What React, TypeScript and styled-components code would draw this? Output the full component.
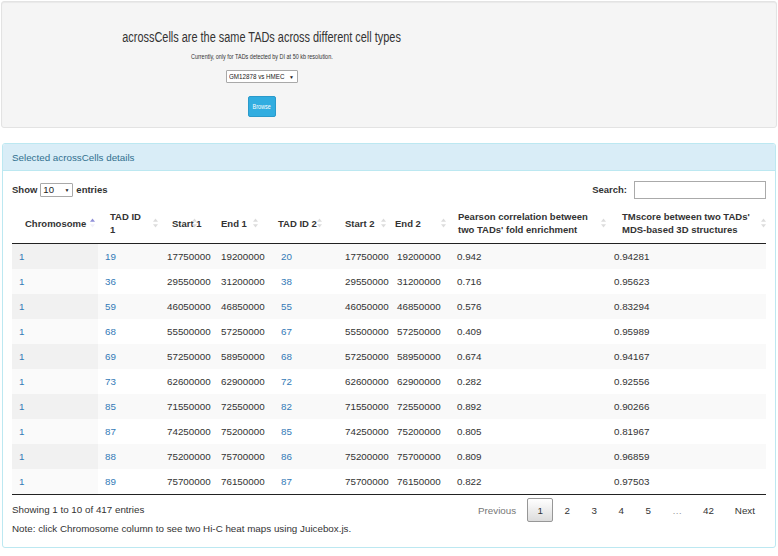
import React from 'react';
import styled, { createGlobalStyle, css } from 'styled-components';

const GlobalStyle = createGlobalStyle`
  html, body { margin: 0; padding: 0; background: #fff; }
  body {
    font-family: "Liberation Sans", Arial, Helvetica, sans-serif;
    font-size: 9.8px;
    color: #333;
  }
  * { box-sizing: border-box; }
`;

/* the top well uses a condensed face; emulate it by squeezing the glyphs */
const narrow = css`
  display: inline-block;
  white-space: nowrap;
  transform: scaleX(0.78);
  transform-origin: center;
`;

const Page = styled.div`
  width: 778px;
  padding: 1px 1px 8px 1px;
`;

const Well = styled.div`
  height: 127px;
  background: #f5f5f5;
  border: 1px solid #e3e3e3;
  border-radius: 3px;
  box-shadow: inset 0 1px 1px rgba(0, 0, 0, 0.05);
`;

const WellColumn = styled.div`
  width: 520px;
  padding-top: 27px;
  display: flex;
  flex-direction: column;
  align-items: center;
`;

const Title = styled.h3`
  ${narrow};
  margin: 0;
  font-size: 14px;
  line-height: 16px;
  font-weight: normal;
  color: #333;
`;

const Subtitle = styled.p`
  ${narrow};
  margin: 7px 0 0;
  font-size: 7px;
  line-height: 10px;
  color: #333;
`;

const FakeSelect = styled.div<{ $w: number; $h: number; $fs: number }>`
  width: ${(p) => p.$w}px;
  height: ${(p) => p.$h}px;
  display: flex;
  align-items: center;
  justify-content: space-between;
  padding: 0 3px 0 2px;
  background: #fff;
  border: 1px solid #a9a9a9;
  border-radius: 1px;
  font-size: ${(p) => p.$fs}px;
  font-weight: normal;
  color: #222;
  overflow: hidden;
`;

const NarrowText = styled.span`
  ${narrow};
  transform-origin: left center;
  margin-right: -16px;
`;

const Caret = styled.span`
  font-size: 5px;
  color: #222;
`;

const TopSelect = styled(FakeSelect)`
  margin-top: 8px;
`;

const BrowseButton = styled.button`
  margin-top: 13px;
  width: 28px;
  height: 21px;
  padding: 0;
  display: flex;
  align-items: center;
  justify-content: center;
  background: #31ade0;
  border: 1px solid #2a9acb;
  border-radius: 2px;
  color: #fff;
  font-family: inherit;
  font-size: 7px;
`;

const ButtonText = styled.span`
  ${narrow};
`;

const Panel = styled.div`
  margin: 15px 1px 0 1px;
  border: 1px solid #bce8f1;
  border-radius: 3px;
  overflow: hidden;
`;

const PanelHeading = styled.div`
  height: 27px;
  display: flex;
  align-items: center;
  padding: 0 9px;
  background: #d9edf7;
  border-bottom: 1px solid #bce8f1;
  color: #31708f;
  font-size: 9.8px;
`;

const PanelBody = styled.div`
  padding: 9px 9px 12px 9px;
`;

const Controls = styled.div`
  height: 19px;
  display: flex;
  align-items: center;
  justify-content: space-between;
`;

const Label = styled.label`
  display: flex;
  align-items: center;
  gap: 3px;
  font-weight: bold;
  font-size: 9.5px;
`;

const SearchInput = styled.div`
  width: 132px;
  height: 18px;
  margin-left: 4px;
  border: 1px solid #aaa;
  background: #fff;
`;

const Table = styled.table`
  width: 754px;
  margin-top: 4px;
  table-layout: fixed;
  border-collapse: collapse;
  border-bottom: 1px solid #222;
`;

const Col = styled.col<{ $w: number }>`
  width: ${(p) => p.$w}px;
`;

const Th = styled.th<{ $pl: number }>`
  position: relative;
  padding: 7px 9px 7px ${(p) => p.$pl}px;
  line-height: 13px;
  font-weight: bold;
  font-size: 9.5px;
  text-align: left;
  vertical-align: middle;
  border-bottom: 1px solid #222;
`;

const SortIcon = styled.svg<{ $r: number }>`
  position: absolute;
  right: ${(p) => p.$r}px;
  top: 50%;
  margin-top: -5px;
  width: 7px;
  height: 10px;
`;

const Tr = styled.tr<{ $odd: boolean }>`
  background: ${(p) => (p.$odd ? '#f9f9f9' : '#fff')};
  & + & td { border-top: 1px solid #ddd; }
`;

const Td = styled.td<{ $sorted?: boolean; $odd: boolean }>`
  padding: 7px 7px;
  line-height: 11px;
  text-align: left;
  white-space: nowrap;
  background: ${(p) => (p.$sorted ? (p.$odd ? '#f1f1f1' : '#fafafa') : 'transparent')};
`;

const Link = styled.a`
  color: #337ab7;
  text-decoration: none;
`;

const Footer = styled.div`
  display: flex;
  justify-content: space-between;
  align-items: center;
  margin-top: 3px;
`;

const Info = styled.div`
  line-height: 12px;
`;

const Pager = styled.div`
  display: flex;
  align-items: center;
  margin-right: 1px;
`;

const PageButton = styled.span<{ $current?: boolean; $tone?: string }>`
  display: flex;
  align-items: center;
  justify-content: center;
  height: 24px;
  min-width: 26px;
  padding: 0 9px;
  margin-left: 1px;
  border: 1px solid ${(p) => (p.$current ? '#979797' : 'transparent')};
  border-radius: 2px;
  background: ${(p) => (p.$current ? 'linear-gradient(to bottom, #fff 0%, #dcdcdc 100%)' : 'transparent')};
  color: ${(p) => p.$tone ?? '#333'};
`;

const Note = styled.p`
  margin: 1px 0 0;
  line-height: 12px;
`;

type Column = { label: React.ReactNode; w: number; pl: number; ir: number; asc?: boolean };

const columns: Column[] = [
  { label: 'Chromosome', w: 86, pl: 13, ir: 2.5, asc: true },
  { label: <>TAD ID<br />1</>, w: 62, pl: 12, ir: 1.5 },
  { label: 'Start 1', w: 54, pl: 12, ir: 16.5 },
  { label: 'End 1', w: 60, pl: 7, ir: 15.5 },
  { label: 'TAD ID 2', w: 64, pl: 4, ir: 15 },
  { label: 'Start 2', w: 52, pl: 7, ir: 3.5 },
  { label: 'End 2', w: 60, pl: 5, ir: 3.5 },
  { label: 'Pearson correlation between two TADs\' fold enrichment', w: 157, pl: 8, ir: 0.5 },
  { label: 'TMscore between two TADs\' MDS-based 3D structures', w: 159, pl: 15, ir: -0.5 },
];

const rows: string[][] = [
  ['1', '19', '17750000', '19200000', '20', '17750000', '19200000', '0.942', '0.94281'],
  ['1', '36', '29550000', '31200000', '38', '29550000', '31200000', '0.716', '0.95623'],
  ['1', '59', '46050000', '46850000', '55', '46050000', '46850000', '0.576', '0.83294'],
  ['1', '68', '55500000', '57250000', '67', '55500000', '57250000', '0.409', '0.95989'],
  ['1', '69', '57250000', '58950000', '68', '57250000', '58950000', '0.674', '0.94167'],
  ['1', '73', '62600000', '62900000', '72', '62600000', '62900000', '0.282', '0.92556'],
  ['1', '85', '71550000', '72550000', '82', '71550000', '72550000', '0.892', '0.90266'],
  ['1', '87', '74250000', '75200000', '85', '74250000', '75200000', '0.805', '0.81967'],
  ['1', '88', '75200000', '75700000', '86', '75200000', '75700000', '0.809', '0.96859'],
  ['1', '89', '75700000', '76150000', '87', '75700000', '76150000', '0.822', '0.97503'],
];

const linkCols = new Set([0, 1, 4]);

function Sort({ asc, right }: { asc?: boolean; right: number }) {
  return (
    <SortIcon $r={right} viewBox="0 0 7 10">
      <path d="M3.5 0.5 L6 3.8 L1 3.8 Z" fill={asc ? '#8f8fd8' : '#dcdcdc'} />
      <path d="M3.5 9.5 L6 6.2 L1 6.2 Z" fill={asc ? '#f0f0f8' : '#dcdcdc'} />
    </SortIcon>
  );
}

export default function App() {
  return (
    <Page>
      <GlobalStyle />
      <Well>
        <WellColumn>
          <Title>acrossCells are the same TADs across different cell types</Title>
          <Subtitle>Currently, only for TADs detected by DI at 50 kb resolution.</Subtitle>
          <TopSelect $w={72} $h={13} $fs={8}>
            <NarrowText>GM12878 vs HMEC</NarrowText>
            <Caret>▼</Caret>
          </TopSelect>
          <BrowseButton>
            <ButtonText>Browse</ButtonText>
          </BrowseButton>
        </WellColumn>
      </Well>
      <Panel>
        <PanelHeading>Selected acrossCells details</PanelHeading>
        <PanelBody>
          <Controls>
            <Label>
              Show
              <FakeSelect $w={33} $h={14} $fs={9.6}>
                <span>10</span>
                <Caret>▼</Caret>
              </FakeSelect>
              entries
            </Label>
            <Label>
              Search:
              <SearchInput />
            </Label>
          </Controls>
          <Table>
            <colgroup>
              {columns.map((c, i) => (
                <Col key={i} $w={c.w} />
              ))}
            </colgroup>
            <thead>
              <tr>
                {columns.map((c, i) => (
                  <Th key={i} $pl={c.pl}>
                    {c.label}
                    <Sort asc={c.asc} right={c.ir} />
                  </Th>
                ))}
              </tr>
            </thead>
            <tbody>
              {rows.map((r, ri) => (
                <Tr key={ri} $odd={ri % 2 === 0}>
                  {r.map((v, ci) => (
                    <Td key={ci} $sorted={ci === 0} $odd={ri % 2 === 0}>
                      {linkCols.has(ci) ? <Link href="#">{v}</Link> : v}
                    </Td>
                  ))}
                </Tr>
              ))}
            </tbody>
          </Table>
          <Footer>
            <Info>Showing 1 to 10 of 417 entries</Info>
            <Pager>
              <PageButton $tone="#777">Previous</PageButton>
              <PageButton $current>1</PageButton>
              <PageButton>2</PageButton>
              <PageButton>3</PageButton>
              <PageButton>4</PageButton>
              <PageButton>5</PageButton>
              <PageButton $tone="#999">…</PageButton>
              <PageButton>42</PageButton>
              <PageButton>Next</PageButton>
            </Pager>
          </Footer>
          <Note>Note: click Chromosome column to see two Hi-C heat maps using Juicebox.js.</Note>
        </PanelBody>
      </Panel>
    </Page>
  );
}
